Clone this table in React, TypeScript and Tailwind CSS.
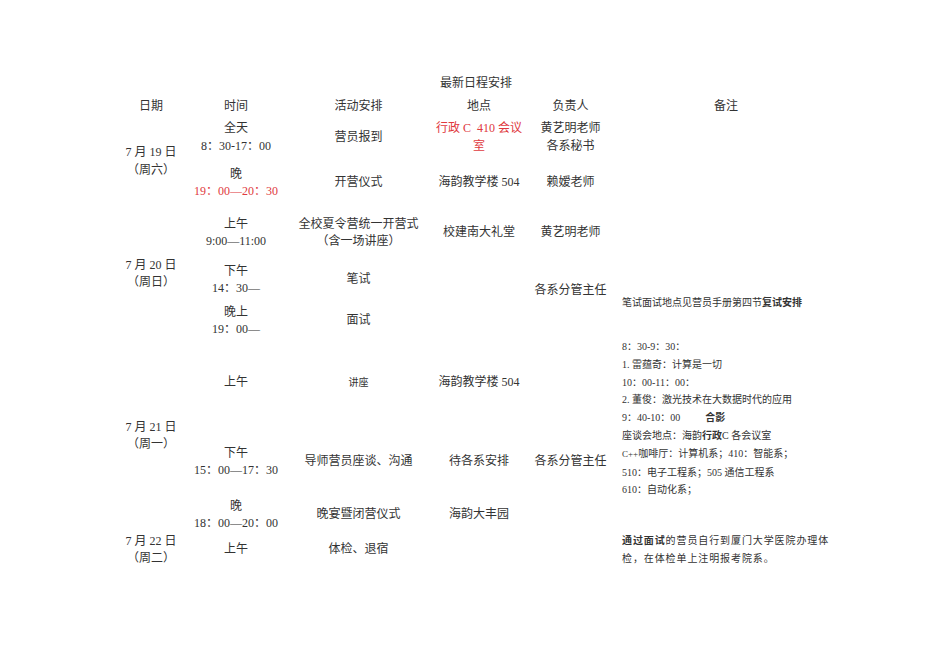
import type { ReactNode } from "react";

const RED = "text-[#e0393e]";

function Cell({ className, children }: { className: string; children: ReactNode }) {
  return (
    <div className={`flex flex-col items-center justify-center text-center whitespace-nowrap ${className}`}>
      {children}
    </div>
  );
}

export default function App() {
  return (
    <div
      className="w-[950px] h-[672px] bg-white text-[#333] text-[12px] leading-[17.5px]"
      style={{ fontFamily: '"Liberation Serif", "Noto Sans CJK SC", serif' }}
    >
      <div className="pt-[74px] pl-[108px]">
        <div className="grid grid-cols-[86px_84px_161px_80px_103px_208px] grid-rows-[19px_27px_35px_56px_44px_50px_32px_92px_66px_40px_30px]">
          {/* title */}
          <div className="col-start-4 row-start-1 pl-px whitespace-nowrap self-center">最新日程安排</div>

          {/* header */}
          <Cell className="col-start-1 row-start-2">日期</Cell>
          <Cell className="col-start-2 row-start-2">时间</Cell>
          <Cell className="col-start-3 row-start-2">活动安排</Cell>
          <Cell className="col-start-4 row-start-2">地点</Cell>
          <Cell className="col-start-5 row-start-2">负责人</Cell>
          <Cell className="col-start-6 row-start-2">备注</Cell>

          {/* 7月19日 */}
          <Cell className="col-start-1 row-start-3 row-span-2 pb-[8px]">
            <span>7 月 19 日</span>
            <span>（周六）</span>
          </Cell>
          <Cell className="col-start-2 row-start-3">
            <span>全天</span>
            <span>8：30-17：00</span>
          </Cell>
          <Cell className="col-start-3 row-start-3">营员报到</Cell>
          <Cell className={`col-start-4 row-start-3 ${RED}`}>
            <span>行政 C&nbsp; 410 会议</span>
            <span>室</span>
          </Cell>
          <Cell className="col-start-5 row-start-3">
            <span>黄艺明老师</span>
            <span>各系秘书</span>
          </Cell>

          <Cell className="col-start-2 row-start-4">
            <span>晚</span>
            <span className={RED}>19：00—20：30</span>
          </Cell>
          <Cell className="col-start-3 row-start-4">开营仪式</Cell>
          <Cell className="col-start-4 row-start-4">海韵教学楼 504</Cell>
          <Cell className="col-start-5 row-start-4">赖嫒老师</Cell>

          {/* 7月20日 */}
          <Cell className="col-start-1 row-start-5 row-span-3">
            <span>7 月 20 日</span>
            <span>（周日）</span>
          </Cell>
          <Cell className="col-start-2 row-start-5">
            <span>上午</span>
            <span>9:00—11:00</span>
          </Cell>
          <Cell className="col-start-3 row-start-5">
            <span>全校夏令营统一开营式</span>
            <span>（含一场讲座）</span>
          </Cell>
          <Cell className="col-start-4 row-start-5">校建南大礼堂</Cell>
          <Cell className="col-start-5 row-start-5">黄艺明老师</Cell>

          <Cell className="col-start-2 row-start-6">
            <span>下午</span>
            <span>14：30—</span>
          </Cell>
          <Cell className="col-start-3 row-start-6">笔试</Cell>
          <Cell className="col-start-5 row-start-6 row-span-2 pb-[10px]">各系分管主任</Cell>
          <div className="col-start-6 row-start-6 row-span-2 flex items-center pt-[14px] text-[10px] whitespace-nowrap">
            <span>
              笔试面试地点见营员手册第四节<b>复试安排</b>
            </span>
          </div>

          <Cell className="col-start-2 row-start-7">
            <span>晚上</span>
            <span>19：00—</span>
          </Cell>
          <Cell className="col-start-3 row-start-7">面试</Cell>

          {/* 7月21日 */}
          <Cell className="col-start-1 row-start-8 row-span-3">
            <span>7 月 21 日</span>
            <span>（周一）</span>
          </Cell>
          <Cell className="col-start-2 row-start-8">上午</Cell>
          <Cell className="col-start-3 row-start-8 text-[10px]">讲座</Cell>
          <Cell className="col-start-4 row-start-8">海韵教学楼 504</Cell>
          <div className="col-start-6 row-start-8 row-span-3 pt-px flex flex-col text-[10px] leading-[17.8px] whitespace-nowrap">
            <span>8：30-9：30：</span>
            <span>1. 雷蕴奇：计算是一切</span>
            <span>10：00-11：00：</span>
            <span>2. 董俊：激光技术在大数据时代的应用</span>
            <span>
              9：40-10：00<b className="ml-[25px]">合影</b>
            </span>
            <span>
              座谈会地点：海韵<b>行政</b>C 各会议室
            </span>
            <span>
              <span className="text-[9px]">C++</span>咖啡厅：计算机系；410：智能系；
            </span>
            <span>510：电子工程系；505 通信工程系</span>
            <span>610：自动化系；</span>
          </div>

          <Cell className="col-start-2 row-start-9">
            <span>下午</span>
            <span>15：00—17：30</span>
          </Cell>
          <Cell className="col-start-3 row-start-9">导师营员座谈、沟通</Cell>
          <Cell className="col-start-4 row-start-9">待各系安排</Cell>
          <Cell className="col-start-5 row-start-9">各系分管主任</Cell>

          <Cell className="col-start-2 row-start-10">
            <span>晚</span>
            <span>18：00—20：00</span>
          </Cell>
          <Cell className="col-start-3 row-start-10">晚宴暨闭营仪式</Cell>
          <Cell className="col-start-4 row-start-10">海韵大丰园</Cell>

          {/* 7月22日 */}
          <Cell className="col-start-1 row-start-11">
            <span>7 月 22 日</span>
            <span>（周二）</span>
          </Cell>
          <Cell className="col-start-2 row-start-11">上午</Cell>
          <Cell className="col-start-3 row-start-11">体检、退宿</Cell>
          <div className="col-start-6 row-start-11 flex flex-col justify-center text-[10px] tracking-[0.9px] leading-[17.8px] whitespace-nowrap">
            <span>
              <b>通过面试</b>的营员自行到厦门大学医院办理体
            </span>
            <span>检，在体检单上注明报考院系。</span>
          </div>
        </div>
      </div>
    </div>
  );
}
